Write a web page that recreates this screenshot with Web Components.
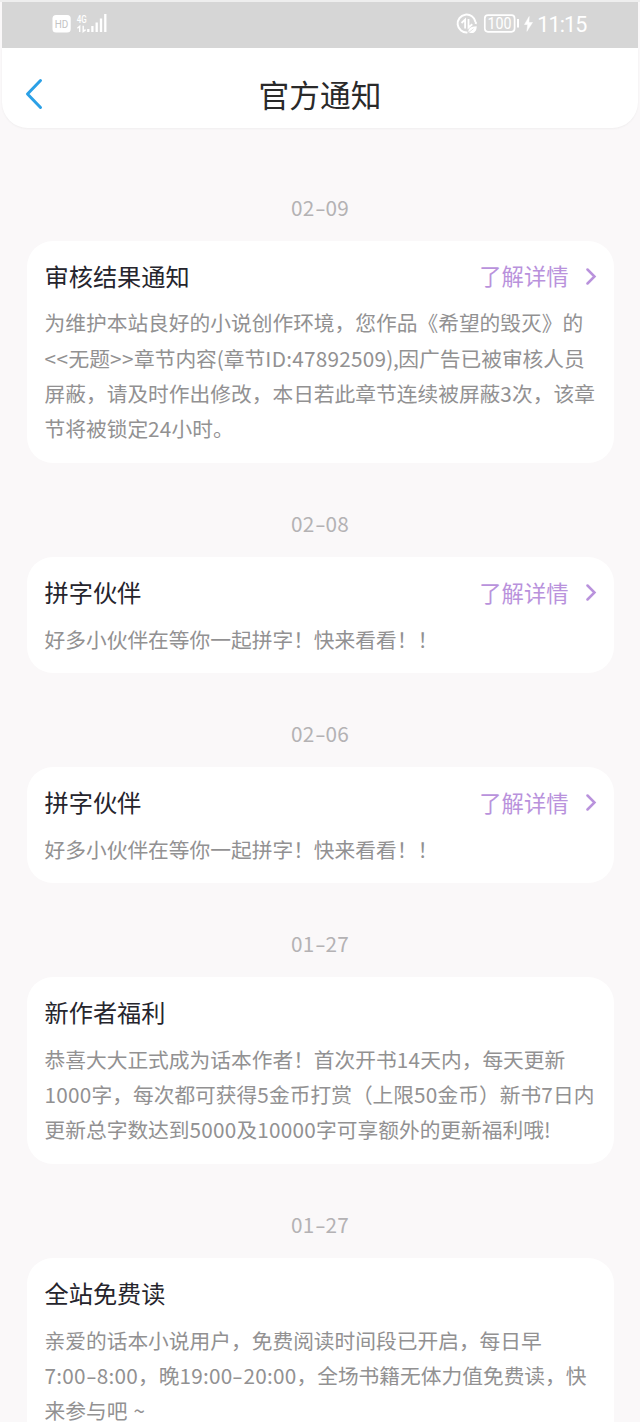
<!DOCTYPE html>
<html lang="zh-CN">
<head>
<meta charset="utf-8">
<title>官方通知</title>
<style>
html,body{margin:0;height:1422px;overflow:hidden;background:#faf8f9}
body{font-family:"Noto Sans CJK SC",sans-serif}
</style>
</head>
<body>
<notice-page>
  <status-bar></status-bar>
  <page-header>官方通知</page-header>
  <date-label>02-09</date-label>
  <notice-card heading="审核结果通知" link>
    <text-line>为维护本站良好的小说创作环境，您作品《希望的毁灭》的</text-line>
    <text-line>&lt;&lt;无题&gt;&gt;章节内容(章节ID:47892509),因广告已被审核人员</text-line>
    <text-line>屏蔽，请及时作出修改，本日若此章节连续被屏蔽3次，该章</text-line>
    <text-line>节将被锁定24小时。</text-line>
  </notice-card>
  <date-label>02-08</date-label>
  <notice-card heading="拼字伙伴" link>
    <text-line>好多小伙伴在等你一起拼字！快来看看！！</text-line>
  </notice-card>
  <date-label>02-06</date-label>
  <notice-card heading="拼字伙伴" link>
    <text-line>好多小伙伴在等你一起拼字！快来看看！！</text-line>
  </notice-card>
  <date-label>01-27</date-label>
  <notice-card heading="新作者福利">
    <text-line>恭喜大大正式成为话本作者！首次开书14天内，每天更新</text-line>
    <text-line>1000字，每次都可获得5金币打赏（上限50金币）新书7日内</text-line>
    <text-line>更新总字数达到5000及10000字可享额外的更新福利哦!</text-line>
  </notice-card>
  <date-label>01-27</date-label>
  <notice-card heading="全站免费读">
    <text-line>亲爱的话本小说用户，免费阅读时间段已开启，每日早</text-line>
    <text-line>7:00-8:00，晚19:00-20:00，全场书籍无体力值免费读，快</text-line>
    <text-line>来参与吧 ~</text-line>
  </notice-card>
</notice-page>
<script>
const define = (name, html, setup) => {
  const tpl = document.createElement('template');
  tpl.innerHTML = html;
  customElements.define(name, class extends HTMLElement {
    connectedCallback() {
      if (this.shadowRoot) return;
      this.attachShadow({mode: 'open'}).append(tpl.content.cloneNode(true));
      if (setup) setup(this, this.shadowRoot);
    }
  });
};

define('notice-page', `<style>
:host{display:flex;flex-direction:column;box-sizing:border-box;width:640px;height:1422px;overflow:hidden;background:#faf8f9;border-top:2px solid #eeeeee}
</style><slot></slot>`);

define('status-bar', `<style>
:host{display:flex;flex:none;justify-content:space-between;height:46px;margin:0 2px;background:#d6d6d6}
svg{display:block;width:636px;height:46px}
text{fill:#fff;stroke:none;font-family:Roboto,sans-serif}
</style>
<svg viewBox="2 2 636 46" fill="none" stroke="#fff">
  <rect x="52.5" y="15" width="18.2" height="17.6" rx="3.5" fill="#fff" stroke="none"/>
  <text x="54.8" y="28.1" font-size="11.5" textLength="13.6" lengthAdjust="spacingAndGlyphs" style="fill:#c4c4c4">HD</text>
  <text x="76.8" y="22.5" font-size="11" font-weight="500" textLength="10" lengthAdjust="spacingAndGlyphs">4G</text>
  <path d="M77.4 28.2l2.3-2v5.8M83.2 25.8v5.8l2.4-2" stroke-width="1.4"/>
  <path d="M88.3 29v3M92.4 26v6M96.7 22.5v9.5M101 18.5v13.5M105.3 14v18" stroke-width="2.3"/>
  <path d="M467.5 32.5a9 9 0 1 1 8-10.5" stroke-width="2"/>
  <path d="M475.8 22a9 9 0 0 1-.1 2" stroke-width="2"/>
  <path d="M461.5 23l3.6-3.4v9M468.5 19v8.5l3.8-3.2" stroke-width="1.8"/>
  <path d="M468.5 32.4c-.6-4 2-6 8.2-6.2 0 5.5-3 7.800-7 6.500z" fill="#fff" stroke="none"/>
  <path d="M467.5 33.500l6-4.800" stroke="#d6d6d6" stroke-width=".7"/>
  <rect x="484.800" y="15.200" width="29.800" height="16.600" rx="3.200" stroke-width="1.700"/>
  <text x="487.500" y="29.400" font-size="16" textLength="24" lengthAdjust="spacingAndGlyphs">100</text>
  <path d="M518 19v8.500" stroke-width="2"/>
  <path d="M529.200 16.500l-4.700 8h3.200l-.800 6.800 5.600-8.800h-3.600z" fill="#fff" stroke-width=".5"/>
  <text x="537.300" y="31.600" font-size="21.500" textLength="50" lengthAdjust="spacing">11:15</text>
</svg>`);

define('page-header', `<style>
:host{display:grid;grid-template-columns:48px 1fr 48px;align-items:center;flex:none;box-sizing:border-box;height:80px;margin:0 2px;padding-top:11px;background:#fff;border-radius:0 0 26px 26px;box-shadow:0 1px 2px rgba(60,50,60,.05);color:#2a2a2a}
svg{width:20px;height:32px;margin-left:22px}
h1{margin:0;text-align:center;font-size:30.700px;line-height:40px;font-weight:400}
</style>
<svg viewBox="24 78 20 32" fill="none" stroke="#2ba0e6" stroke-width="3" stroke-linecap="round" stroke-linejoin="round"><path d="M40.500 80.500L27.500 94l13 13.500"/></svg>
<h1><slot></slot></h1>`);

define('date-label', `<style>
:host{display:flex;flex:none;justify-content:center;height:30px;margin:45.500px 0 18.600px;--line:30px;color:#b4b2b4}
:host(:first-of-type){margin-top:64.400px}
text-line{margin-top:-.8px}
</style><text-line></text-line>`, (host, root) => {
  root.querySelector('text-line').textContent = host.textContent;
});

define('notice-card', `<style>
:host{display:block;flex:none;box-sizing:border-box;margin:0 26.500px;padding:17px 17px 16.300px 18px;background:#fff;border-radius:26px}
header{display:flex;justify-content:space-between;align-items:center;height:36px;margin-bottom:11.300px}
h2{margin:0;font-size:24.200px;line-height:36px;font-weight:400;color:#26252d}
a{display:flex;align-items:center;gap:16px;font-size:22.300px;line-height:34px;color:#b992dc}
a span{margin-top:-1px}
svg{width:12px;height:18px}
.body{display:flex;flex-direction:column;color:#929192;--line:35.400px}
</style>
<header><h2></h2><a><span>了解详情</span><svg viewBox="0 0 12 18" fill="none" stroke="currentColor" stroke-width="2.500" stroke-linecap="round"><path d="M2.500 2.500l7 7L2.500 16.500"/></svg></a></header>
<div class="body"><slot></slot></div>`, (host, root) => {
  root.querySelector('h2').textContent = host.getAttribute('heading');
  if (!host.hasAttribute('link')) root.querySelector('a').remove();
});

// Advance widths for half-width characters; full-width ones use the em size.
const advance = {'<': 12, '>': 12, '(': 7, ')': 7, 'I': 6.3, 'D': 14.7, ':': 6, ',': 5, '-': 11, '!': 6, ' ': 7, '~': 12};
define('text-line', `<style>
:host{display:block;font-size:20.730px;line-height:var(--line);height:var(--line);white-space:pre;text-spacing-trim:space-all}
.dash{display:inline-block;width:11px;text-align:center;line-height:1;transform:scaleX(1.5)}
</style><span id="t"></span>`, (host, root) => {
  const box = root.getElementById('t');
  for (const run of host.textContent.match(/\d+|-|[\x20-\x2c\x2e\x2f\x3a-\x7e]+|[^\x20-\x7e]+/g)) {
    const s = document.createElement('span');
    s.textContent = run;
    box.append(s);
    if (run === '-') {
      s.className = 'dash';
    } else if (run.charCodeAt(0) < 127) {
      const want = [...run].reduce((n, c) => n + (advance[c] || 11.75), 0);
      s.style.letterSpacing = (want - s.getBoundingClientRect().width) / run.length + 'px';
    }
  }
});
</script>
</body>
</html>
